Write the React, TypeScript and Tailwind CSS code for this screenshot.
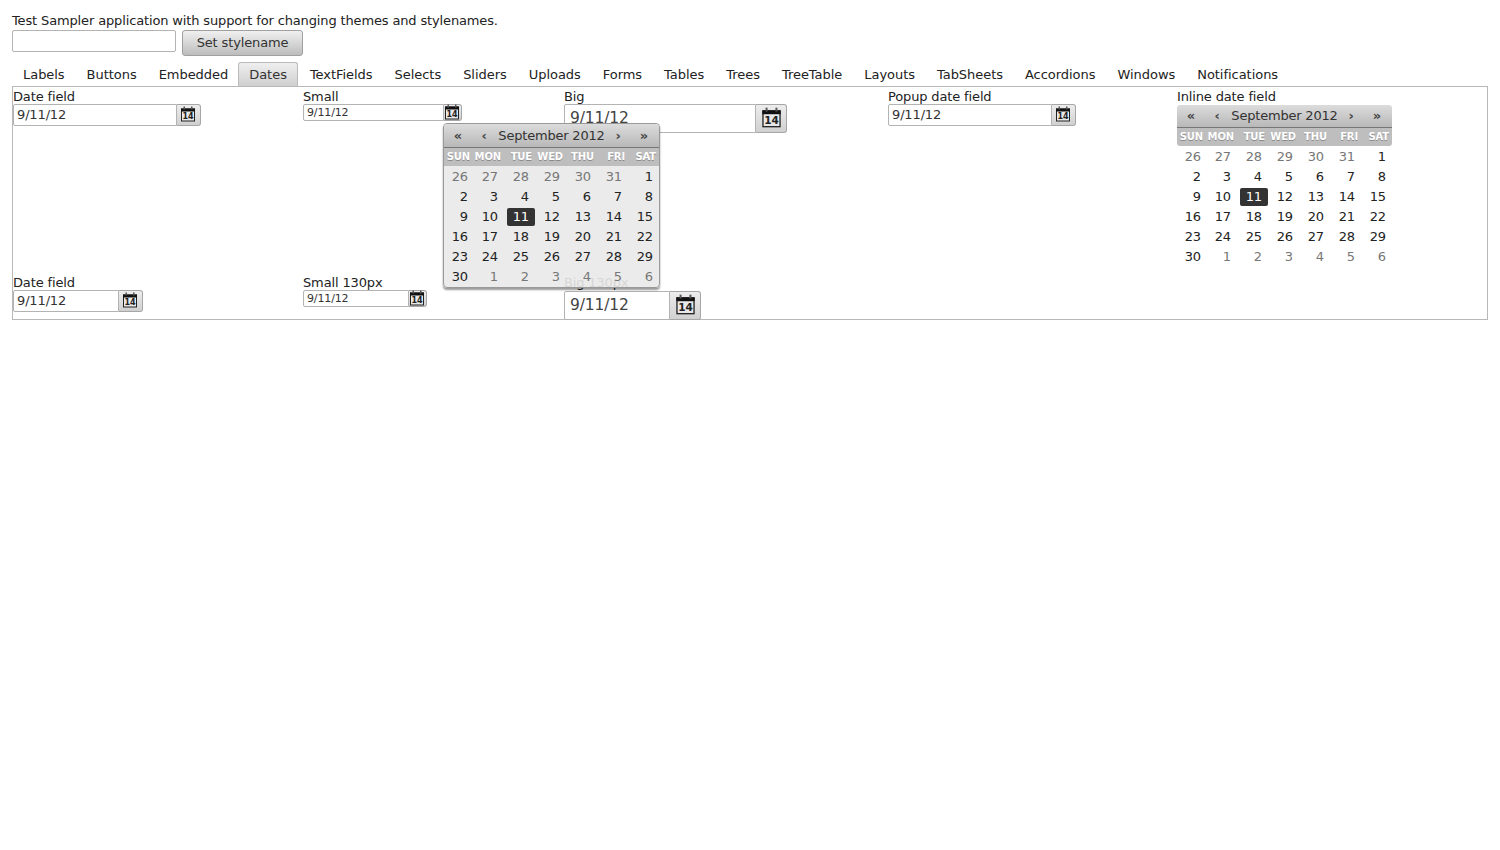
const tabs = ["Labels", "Buttons", "Embedded", "Dates", "TextFields", "Selects", "Sliders", "Uploads", "Forms", "Tables", "Trees", "TreeTable", "Layouts", "TabSheets", "Accordions", "Windows", "Notifications"];
const weekdays = ["SUN", "MON", "TUE", "WED", "THU", "FRI", "SAT"];

const days: { n: number; muted?: boolean }[] = [
  ...[26, 27, 28, 29, 30, 31].map((n) => ({ n, muted: true })),
  ...Array.from({ length: 30 }, (_, i) => ({ n: i + 1 })),
  ...[1, 2, 3, 4, 5, 6].map((n) => ({ n, muted: true })),
];

function CalendarIcon({ size }: { size: number }) {
  return (
    <svg width={size} height={size} viewBox="0 0 16 16">
      <rect x="1.5" y="3" width="13" height="12" fill="#e8e8e8" stroke="#222" />
      <rect x="1" y="2.5" width="14" height="3" fill="#111" />
      <rect x="3.5" y="0.5" width="1.5" height="3" fill="#555" />
      <rect x="11" y="0.5" width="1.5" height="3" fill="#555" />
      <text x="8" y="13" textAnchor="middle" fontSize="8" fontWeight="700" letterSpacing="0" fill="#222" fontFamily="'DejaVu Sans', sans-serif">
        14
      </text>
    </svg>
  );
}

type FieldSize = "small" | "normal" | "big";

function DateField({ width, size = "normal" }: { width: number; size?: FieldSize }) {
  const input = {
    small: "h-[17px] text-[11px] pl-[3px] leading-[16px]",
    normal: "h-[22px] text-[13px] pl-[3px] leading-[20px]",
    big: "h-[29px] text-[15.5px] pl-[5px] leading-[27px] text-[#444]",
  }[size];
  const button = {
    small: "w-[18px] h-[17px] pb-[2px] pr-[1px]",
    normal: "w-[24px] h-[22px] pb-[2px] pr-[2px]",
    big: "w-[31px] h-[29px] pb-[2px]",
  }[size];
  return (
    <div className="flex items-start">
      <div style={{ width }} className={`overflow-hidden border border-[#b3b3b3] rounded-l-[2px] bg-white text-[#333] ${input}`}>
        9/11/12
      </div>
      <div className={`flex items-center justify-center border border-l-0 border-[#a6a6a6] rounded-r-[3px] bg-gradient-to-b from-[#ededed] to-[#d0d0d0] ${button}`}>
        <CalendarIcon size={size === "big" ? 21 : 16} />
      </div>
    </div>
  );
}

function Field({ label, className, children }: { label: string; className?: string; children: React.ReactNode }) {
  return (
    <div className={className}>
      <div className="h-[17px] leading-[20px] text-[#222]">{label}</div>
      {children}
    </div>
  );
}

function Calendar({ popup }: { popup?: boolean }) {
  return (
    <div className={`w-[215px] text-[#222] ${popup ? "" : "pt-[1px]"}`}>
      <div className={`flex items-center border-b border-[#777] bg-gradient-to-b from-[#dcdcdc] to-[#b8b8b8] text-[#333] ${popup ? "h-[24px] rounded-t-[3px]" : "h-[23px] rounded-t-[3px]"}`}>
        <span className="w-[28px] shrink-0 text-center font-bold text-[#444]">«</span>
        <span className="w-[24px] shrink-0 text-center font-bold text-[#444]">‹</span>
        <span className="flex-1 whitespace-nowrap text-center tracking-[-0.2px]">September 2012</span>
        <span className="w-[22px] shrink-0 text-center font-bold text-[#444]">›</span>
        <span className="w-[30px] shrink-0 text-center font-bold text-[#444]">»</span>
      </div>
      <div className={`grid h-[18px] grid-cols-[29px_repeat(6,31px)] items-center bg-[#bebebe] text-[10px] font-bold text-white [text-shadow:0_1px_0_#8a8a8a] ${popup ? "" : "rounded-b-[3px]"}`}>
        {weekdays.map((d) => (
          <span key={d} className="pr-[3px] text-right leading-[18px]">
            {d}
          </span>
        ))}
      </div>
      <div className="mt-[1px] grid grid-cols-[29px_repeat(6,31px)] auto-rows-[20px]">
        {days.map((d, i) => (
          <div key={i} className="flex items-center justify-end">
            {d.n === 11 && !d.muted ? (
              <span className="h-[18px] w-[28px] rounded-[2px] bg-[#333] pr-[6px] text-right leading-[18px] text-white">11</span>
            ) : (
              <span className={`leading-[18px] ${i % 7 === 0 ? "pr-[5px]" : "pr-[6px]"} ${d.muted ? "text-[#777]" : ""}`}>{d.n}</span>
            )}
          </div>
        ))}
      </div>
    </div>
  );
}

export default function App() {
  return (
    <div className="min-h-screen bg-white px-[12px] pt-[12px] text-[13px] tracking-[-0.14px] text-[#222] [font-family:'DejaVu_Sans',sans-serif]">
      <div className="h-[18px] leading-[17px]">Test Sampler application with support for changing themes and stylenames.</div>
      <div className="flex items-start gap-[6px]">
        <div className="h-[22px] w-[164px] rounded-[2px] border border-[#b3b3b3] bg-white" />
        <div className="flex h-[26px] w-[121px] items-center justify-center rounded-[3px] border border-[#a0a0a0] bg-gradient-to-b from-[#f0f0f0] to-[#bdbdbd] text-[#333]">
          Set stylename
        </div>
      </div>

      <div className="mt-[6px] flex h-[24px] items-end tracking-[-0.04px]">
        {tabs.map((t) =>
          t === "Dates" ? (
            <div key={t} className="-ml-[1px] mr-[1px] h-[24px] rounded-t-[3px] border border-b-0 border-[#bbb] bg-gradient-to-b from-[#efefef] to-[#cfcfcf] px-[10px] leading-[24px] text-[#333]">
              {t}
            </div>
          ) : (
            <div key={t} className="h-[24px] px-[11px] leading-[26px]">
              {t}
            </div>
          ),
        )}
      </div>

      <div className="relative grid h-[234px] grid-cols-[290px_261px_324px_289px_1fr] grid-rows-[186px_46px] border border-[#b8b8b8]">
        <Field label="Date field">
          <DateField width={164} />
        </Field>
        <Field label="Small">
          <DateField width={141} size="small" />
        </Field>
        <Field label="Big">
          <DateField width={192} size="big" />
        </Field>
        <Field label="Popup date field">
          <DateField width={164} />
        </Field>
        <Field label="Inline date field">
          <Calendar />
        </Field>

        <Field label="Date field">
          <DateField width={106} />
        </Field>
        <Field label="Small 130px">
          <DateField width={106} size="small" />
        </Field>
        <Field label="Big 130px">
          <div className="pt-[1px]">
            <DateField width={106} size="big" />
          </div>
        </Field>

        <div className="absolute left-[430px] top-[36px] rounded-[4px] border border-[#999] bg-[#e9e9e9]/90 shadow-[0_2px_2px_rgba(0,0,0,0.4)]">
          <Calendar popup />
        </div>
      </div>
    </div>
  );
}
